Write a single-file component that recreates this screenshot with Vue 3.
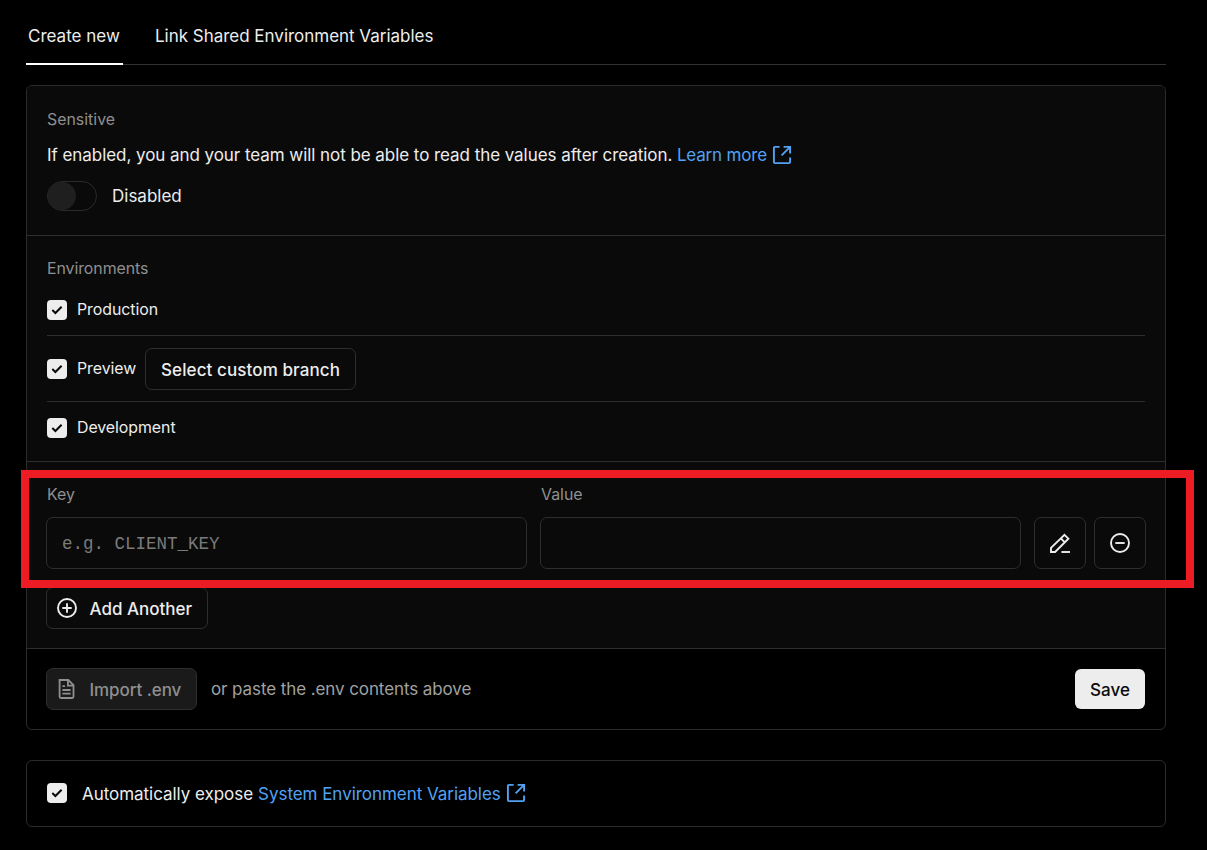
<script setup>
import { ref } from 'vue'

const environments = ref([
  { name: 'Production', cls: 'production', checked: true },
  { name: 'Preview', cls: 'preview', checked: true, branch: true },
  { name: 'Development', cls: 'development', checked: true },
])
const key = ref('')
const value = ref('')
</script>

<template>
  <main class="page">
    <nav class="tabs">
      <a class="tab active"><span class="t-create">Create new</span></a>
      <a class="tab"><span class="t-link">Link Shared Environment Variables</span></a>
    </nav>

    <section class="card">
      <div class="block sensitive">
        <h4 class="label">Sensitive</h4>
        <p class="desc">
          <span class="t-desc">If enabled, you and your team will not be able to read the values after creation.</span>
          <a class="link t-learn">Learn more</a>
          <svg class="ext" viewBox="0 0 20 20"><path d="M7.6 1.9H2.9a1 1 0 0 0-1 1v14.2a1 1 0 0 0 1 1h14.2a1 1 0 0 0 1-1v-4.6M11.6 1.9h6.5v6.5M17.6 2.4 9.6 10.4" /></svg>
        </p>
        <div class="toggle-row">
          <span class="toggle"><i></i></span>
          <span class="t-disabled">Disabled</span>
        </div>
      </div>

      <div class="block envs">
        <h4 class="label t-environments">Environments</h4>
        <div v-for="env in environments" :key="env.name" class="env" :class="env.cls">
          <span class="check">
            <svg viewBox="0 0 20 20"><path d="m5.3 10.1 3.1 2.9 6.2-6.2" /></svg>
          </span>
          <span class="env-name">{{ env.name }}</span>
          <button v-if="env.branch" class="btn branch"><span>Select custom branch</span></button>
        </div>
      </div>

      <div class="block vars">
        <div class="fields">
          <label class="field">
            <span class="label">Key</span>
            <input v-model="key" placeholder="e.g. CLIENT_KEY" />
          </label>
          <label class="field">
            <span class="label">Value</span>
            <input v-model="value" />
          </label>
          <div class="actions">
            <button class="btn square">
              <svg viewBox="0 0 20 20"><path d="M14.5 1.8 18.4 5.7 5.1 19H1v-4.1L14.5 1.8ZM10.9 5.4l3.9 3.9" /><path d="M11.4 19H20" /></svg>
            </button>
            <button class="btn square">
              <svg viewBox="0 0 20 20"><circle cx="10" cy="10" r="9" /><path d="M5.3 10h9.4" /></svg>
            </button>
          </div>
          <div class="highlight"></div>
        </div>
        <button class="btn add">
          <svg viewBox="0 0 20 20"><circle cx="10" cy="10" r="9" /><path d="M5.3 10h9.4M10 5.3v9.4" /></svg>
          <span>Add Another</span>
        </button>
      </div>

      <footer class="foot">
        <button class="btn import">
          <svg viewBox="0 0 20 20"><path d="M2.6 1h8.7l5.2 5.2V17.6a1.4 1.4 0 0 1-1.4 1.4H4a1.4 1.4 0 0 1-1.4-1.4ZM10.9 1v5.6h5.6M5.4 7.2h2.7M5.4 11h8.2M5.4 14.6h8.2" /></svg>
          <span>Import .env</span>
        </button>
        <span class="hint">or paste the .env contents above</span>
        <button class="save"><span>Save</span></button>
      </footer>
    </section>

    <section class="card expose">
      <span class="check">
        <svg viewBox="0 0 20 20"><path d="m5.3 10.1 3.1 2.9 6.2-6.2" /></svg>
      </span>
      <span class="t-auto">Automatically expose</span>
      <a class="link t-system">System Environment Variables</a>
      <svg class="ext" viewBox="0 0 20 20"><path d="M7.6 1.9H2.9a1 1 0 0 0-1 1v14.2a1 1 0 0 0 1 1h14.2a1 1 0 0 0 1-1v-4.6M11.6 1.9h6.5v6.5M17.6 2.4 9.6 10.4" /></svg>
    </section>
  </main>
</template>

<style>
body { background: #000; }
</style>

<style scoped>
* { box-sizing: border-box; }
.page {
  height: 850px;
  padding: 0 41px 0 26px;
  overflow: hidden;
  background: #000;
  color: #ededed;
  font: 17px/24px Inter, "Liberation Sans", sans-serif;
  white-space: nowrap;
}
h4, p { margin: 0; font-weight: 400; }
svg { display: block; width: 20px; height: 20px; flex: none; fill: none; stroke: currentColor; stroke-width: 1.9; }
button { font: inherit; color: inherit; margin: 0; }

.tabs { display: flex; gap: 29px; height: 65px; border-bottom: 1px solid #333; }
.tab { height: 65px; padding: 24px 3px 0; }
.tab.active { width: 97px; padding-left: 2px; border-bottom: 2px solid #fff; }
.t-link { letter-spacing: -0.02px; }

.card { border: 1px solid #2b2b2b; border-radius: 6px; }
.tabs + .card { margin-top: 20px; height: 645px; }
.block { background: #0a0a0a; border-bottom: 1px solid #2e2e2e; padding: 0 20px; }
.label { color: #8f8f8f; font-size: 15.9px; line-height: 20px; }

.sensitive { height: 150px; padding-top: 24px; border-radius: 5px 5px 0 0; }
.desc { display: flex; align-items: center; height: 24px; margin-top: 13px; }
.t-desc { letter-spacing: -0.058px; }
.link { color: #52a2f2; }
.t-learn { margin-left: 4.6px; letter-spacing: -0.18px; }
.ext { color: #52a2f2; margin-left: 5px; }
.toggle-row { display: flex; align-items: center; gap: 15px; height: 30px; margin-top: 14px; }
.toggle { width: 50px; height: 30px; border: 1px solid #2b2b2b; border-radius: 15px; }
.toggle i { display: block; width: 28px; height: 28px; border-radius: 50%; background: #1f1f1f; }

.envs { height: 226px; padding-top: 23px; }
.t-environments { letter-spacing: -0.07px; }
.env { display: flex; align-items: center; font-size: 15.9px; }
.check { display: block; width: 20px; height: 20px; flex: none; border-radius: 4px; background: #ededed; color: #0a0a0a; }
.check svg { stroke-width: 2; }
.env-name { margin-left: 10px; letter-spacing: -0.06px; }
.production { height: 57px; padding-top: 6px; border-bottom: 1px solid #2e2e2e; }
.preview { height: 66px; border-bottom: 1px solid #2e2e2e; }
.development { height: 52px; }
.btn {
  display: flex; align-items: center; height: 42px; padding: 0;
  border: 1px solid #2e2e2e; border-radius: 7px; background: #0a0a0a; font-weight: 500; font-size: 17px;
}
.btn span { padding-top: 2px; }
.branch { width: 211px; padding-left: 15px; letter-spacing: 0.1px; }
.preview .env-name { width: 59px; }
.preview .branch { margin-left: 9px; }

.vars { height: 187px; padding: 23px 19px 0; }
.fields { position: relative; display: flex; gap: 13px; height: 84px; }
.field { width: 481px; }
.field .label { display: block; padding-left: 1px; }
.field input {
  display: block; width: 100%; height: 52px; margin-top: 12px; padding: 2px 15px 0;
  border: 1px solid #2e2e2e; border-radius: 7px; background: #0a0a0a; color: #ededed; outline: 0;
  font: 17.5px "Liberation Mono", monospace;
}
.field input::placeholder { color: #7b7b7b; opacity: 1; }
.actions { display: flex; gap: 8px; padding-top: 32px; }
.square { width: 52px; height: 52px; justify-content: center; }
.highlight {
  position: absolute; left: -25px; top: -15px; width: 1173px; height: 118px;
  border: 8px solid #ed1c24; z-index: 2;
}
.add { width: 162px; margin-top: 18px; padding-left: 10px; }
.add span, .import span { margin-left: 12.5px; }
.import span { letter-spacing: -0.07px; }

.foot { display: flex; align-items: center; height: 80px; padding: 0 20px 0 19px; }
.import { width: 151px; padding-left: 10px; background: #1a1a1a; color: #8f8f8f; }
.import svg { stroke-width: 1.8; }
.hint { margin-left: 14px; color: #a1a1a1; letter-spacing: -0.09px; }
.save {
  width: 70px; height: 40px; margin-left: auto; padding: 2px 0 0; border: 0; border-radius: 6px;
  background: #ededed; color: #0a0a0a; font-weight: 500;
}

.expose { display: flex; align-items: center; height: 67px; margin-top: 30px; padding-left: 20px; }
.expose .check, .expose .ext { margin-bottom: 2px; }
.t-auto { margin-left: 15px; letter-spacing: -0.04px; }
.t-system { margin-left: 5px; letter-spacing: -0.04px; }
</style>
